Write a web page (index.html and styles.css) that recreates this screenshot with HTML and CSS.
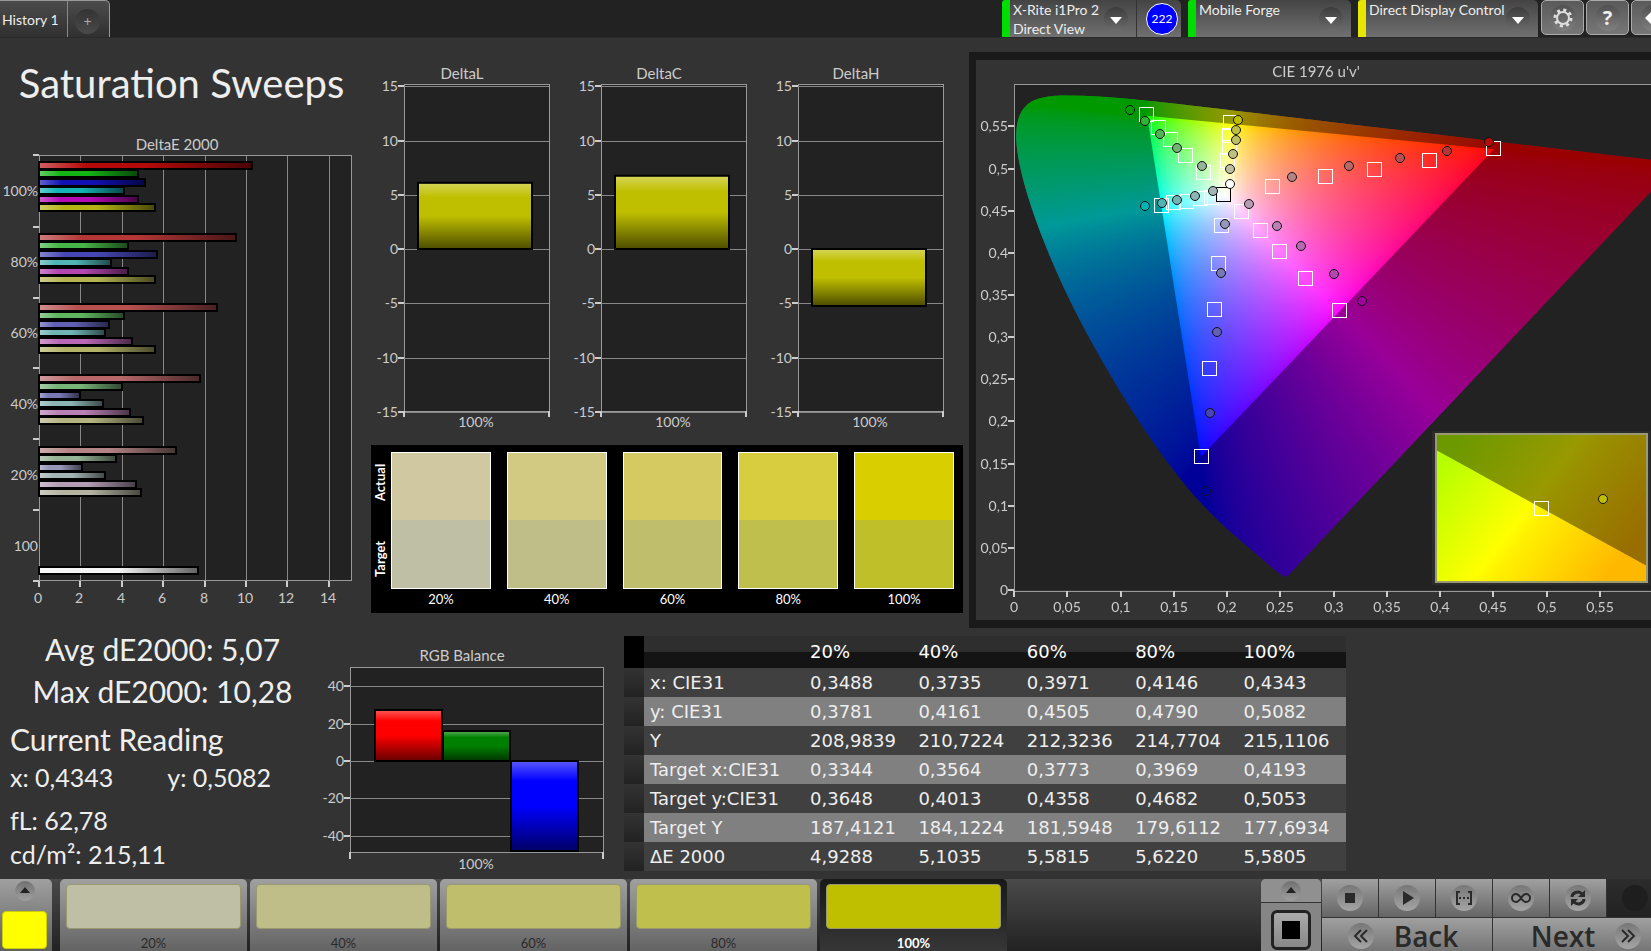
FILE: index.html
```
<!DOCTYPE html>
<html lang="en">

<head>
    <meta charset="UTF-8">
    <meta name="viewport" content="width=device-width, initial-scale=1.0">
    <title>Saturation Sweeps</title>
    <link rel="stylesheet" href="styles.css">
</head>

<body>
    <header class="topbar">
        <div class="tabs">
            <button class="tab">History 1</button>
            <button class="tab tab-add" aria-label="Add tab"><span>+</span></button>
        </div>
        <div class="devices">
            <div class="device meter">
                <button class="device-select">
                    <span class="device-name">X-Rite i1Pro 2<br>Direct View</span>
                    <span class="arrow"></span>
                </button>
                <span class="reading-count">222</span>
            </div>
            <div class="device source">
                <button class="device-select">
                    <span class="device-name">Mobile Forge</span>
                    <span class="arrow"></span>
                </button>
            </div>
            <div class="device display">
                <button class="device-select">
                    <span class="device-name">Direct Display Control</span>
                    <span class="arrow"></span>
                </button>
            </div>
            <div class="tools">
                <button class="tool" aria-label="Settings">
                    <svg viewBox="0 0 26 26" width="26" height="26">
                        <circle cx="13" cy="13" r="6" fill="none" stroke="#ddd" stroke-width="2" />
                        <circle cx="13" cy="13" r="8" fill="none" stroke="#ddd" stroke-width="3" stroke-dasharray="3 3.28" />
                    </svg>
                </button>
                <button class="tool help" aria-label="Help"><span>?</span></button>
                <button class="tool" aria-label="Collapse">
                    <svg viewBox="0 0 26 26" width="26" height="26">
                        <path d="M5 13l8-8v5h8v6h-8v5z" fill="#fff" />
                    </svg>
                </button>
            </div>
        </div>
    </header>

    <main>
        <div class="upper">
            <section class="sweeps">
                <h1>Saturation Sweeps</h1>
                <svg id="deltaE" class="chart" viewBox="0 0 363 475"></svg>
            </section>

            <section class="deltas">
                <div class="delta-charts">
                    <svg id="deltaL" class="chart" viewBox="0 0 197 375"></svg>
                    <svg id="deltaC" class="chart" viewBox="0 0 197 375"></svg>
                    <svg id="deltaH" class="chart" viewBox="0 0 197 375"></svg>
                </div>
                <div class="swatches">
                    <div class="swatch-side"><span>Actual</span><span>Target</span></div>
                    <div class="swatch s20"><i></i>20%</div>
                    <div class="swatch s40"><i></i>40%</div>
                    <div class="swatch s60"><i></i>60%</div>
                    <div class="swatch s80"><i></i>80%</div>
                    <div class="swatch s100"><i></i>100%</div>
                </div>
            </section>

            <section class="cie">
                <canvas id="cieColors" width="675" height="560"></canvas>
                <svg id="cieChart" class="chart" viewBox="976 60 675 560"></svg>
            </section>
        </div>

        <div class="lower">
            <section class="stats">
                <p class="big center">Avg dE2000: 5,07</p>
                <p class="big center">Max dE2000: 10,28</p>
                <h2 class="big">Current Reading</h2>
                <p class="xy"><span>x: 0,4343</span><span>y: 0,5082</span></p>
                <p class="fl">fL: 62,78</p>
                <p>cd/m²: 215,11</p>
            </section>

            <svg id="rgbBalance" class="chart" viewBox="0 0 284 248"></svg>

            <table class="data">
                <thead>
                    <tr><td class="mark"></td><th></th><th>20%</th><th>40%</th><th>60%</th><th>80%</th><th>100%</th></tr>
                </thead>
                <tbody>
                    <tr><td class="mark"></td><th>x: CIE31</th><td>0,3488</td><td>0,3735</td><td>0,3971</td><td>0,4146</td><td>0,4343</td></tr>
                    <tr><td class="mark"></td><th>y: CIE31</th><td>0,3781</td><td>0,4161</td><td>0,4505</td><td>0,4790</td><td>0,5082</td></tr>
                    <tr><td class="mark"></td><th>Y</th><td>208,9839</td><td>210,7224</td><td>212,3236</td><td>214,7704</td><td>215,1106</td></tr>
                    <tr><td class="mark"></td><th>Target x:CIE31</th><td>0,3344</td><td>0,3564</td><td>0,3773</td><td>0,3969</td><td>0,4193</td></tr>
                    <tr><td class="mark"></td><th>Target y:CIE31</th><td>0,3648</td><td>0,4013</td><td>0,4358</td><td>0,4682</td><td>0,5053</td></tr>
                    <tr><td class="mark"></td><th>Target Y</th><td>187,4121</td><td>184,1224</td><td>181,5948</td><td>179,6112</td><td>177,6934</td></tr>
                    <tr><td class="mark"></td><th>ΔE 2000</th><td>4,9288</td><td>5,1035</td><td>5,5815</td><td>5,6220</td><td>5,5805</td></tr>
                </tbody>
            </table>
        </div>
    </main>

    <footer class="bottombar">
        <button class="current" aria-label="Current pattern">
            <span class="knob"></span>
            <i></i>
        </button>
        <div class="patterns">
            <button class="pattern p20"><i></i>20%</button>
            <button class="pattern p40"><i></i>40%</button>
            <button class="pattern p60"><i></i>60%</button>
            <button class="pattern p80"><i></i>80%</button>
            <button class="pattern p100 active"><i></i>100%</button>
        </div>
        <div class="stop-box">
            <button class="expand" aria-label="Expand"><span class="knob"></span></button>
            <button class="stop" aria-label="Stop pattern"><i></i></button>
        </div>
        <div class="transport">
            <button aria-label="Stop"><svg viewBox="0 0 26 26"><path d="M8 8h10v10H8z" /></svg></button>
            <button aria-label="Play"><svg viewBox="0 0 26 26"><path d="M9 6l11 7-11 7z" /></svg></button>
            <button aria-label="Read series"><svg viewBox="0 0 26 26"><path class="line" d="M9 7H6v12h3M17 7h3v12h-3" /><path d="M8 12h2v2H8zM12 12h2v2h-2zM16 12h2v2h-2z" /></svg></button>
            <button aria-label="Continuous"><svg viewBox="0 0 26 26"><path class="line" d="M13 13c-2-3-3-4-5-4a4 4 0 0 0 0 8c2 0 3-1 5-4s3-4 5-4a4 4 0 0 1 0 8c-2 0-3-1-5-4z" /></svg></button>
            <button aria-label="Refresh"><svg viewBox="0 0 26 26"><path class="thick" d="M7 12c0-4 6-7 10-3M19 14c0 4-6 7-10 3" /><path d="M20 5v7h-7zM6 21v-7h7z" /></svg></button>
            <button class="off" aria-label="Record"><svg viewBox="0 0 26 26"></svg></button>
            <button class="wide back"><svg viewBox="0 0 26 26"><path class="line" d="M13 7l-6 6 6 6M19 7l-6 6 6 6" /></svg><span>Back</span></button>
            <button class="wide next"><span>Next</span><svg viewBox="0 0 26 26"><path class="line" d="M7 7l6 6-6 6M13 7l6 6-6 6" /></svg></button>
        </div>
    </footer>

    <script src="script.js"></script>
</body>

</html>
```
FILE: styles.css
```
* {
    box-sizing: border-box;
}

body {
    margin: 0;
    min-height: 100vh;
    display: flex;
    flex-direction: column;
    overflow: hidden;
    background: #333;
    color: #eee;
    font-family: Lato, 'Open Sans', sans-serif;
}

button {
    margin: 0;
    padding: 0;
    border: none;
    background: none;
    color: inherit;
    font: inherit;
    cursor: pointer;
}

h1,
h2,
p {
    margin: 0;
    font-weight: normal;
}

/* Top bar */
.topbar {
    display: flex;
    justify-content: space-between;
    height: 38px;
    overflow: hidden;
    background: #222;
    border-bottom: 1px solid #2a2a2a;
}

.tabs {
    display: flex;
    border: 1px solid #999;
    border-width: 1px 1px 0 0;
    border-top-right-radius: 5px;
    background: linear-gradient(#4c4c4c, #303030);
}

.tab {
    width: 68px;
    padding-left: 2px;
    font-size: 14px;
    text-align: left;
    white-space: nowrap;
    border-right: 1px solid #888;
}

.tab-add {
    width: 41px;
    padding: 4px 0 0 7px;
    border: none;
}

.tab-add span {
    display: block;
    width: 25px;
    height: 25px;
    border-radius: 50%;
    background: linear-gradient(#333, #4a4a4a);
    color: #aaa;
    line-height: 24px;
    text-align: center;
}

.devices {
    display: flex;
    gap: 7px;
    margin-right: -23px;
}

.device {
    display: flex;
    width: 163px;
    border-left: 8px solid #0d0;
    border-radius: 3px 5px 0 0;
    background: linear-gradient(#444, #707070);
}

.meter {
    width: 179px;
}

.display {
    width: 180px;
    border-left-color: #e6e600;
}

.device-select {
    display: flex;
    flex: 1;
    align-items: flex-start;
    justify-content: space-between;
    padding: 0 8px 0 3px;
    text-align: left;
}

.meter .device-select {
    border-right: 1px solid #333;
}

.device-name {
    font-size: 14px;
    line-height: 19px;
    white-space: nowrap;
}

.arrow {
    flex: none;
    width: 24px;
    height: 24px;
    margin: 7px 0 0 -8px;
    padding-top: 10px;
    border-radius: 50%;
    background: linear-gradient(#3c3c3c, #6c6c6c);
}

.arrow::before {
    content: '';
    display: block;
    width: 0;
    margin: 0 auto;
    border: 6px solid transparent;
    border-top: 7px solid #fff;
    border-bottom: none;
}

.reading-count {
    width: 32px;
    height: 32px;
    margin: 3px 3px 0 9px;
    border: 1px solid #fff;
    border-radius: 50%;
    background: #00f;
    color: #fff;
    font-size: 12px;
    line-height: 30px;
    text-align: center;
}

.tools {
    display: flex;
    gap: 2px;
    margin-left: -4px;
}

.tool {
    display: flex;
    align-items: center;
    justify-content: center;
    width: 43px;
    height: 35px;
    border: 1px solid #aaa;
    border-radius: 5px;
    background: linear-gradient(#5a5a5a, #777);
}

.tool svg,
.tool span {
    width: 26px;
    height: 26px;
    border-radius: 50%;
    background: linear-gradient(#505050, #808080);
}

.help {
    font: bold 20px/26px 'Open Sans', sans-serif;
}

/* Charts */
.upper {
    display: grid;
    grid-template-columns: 363fr 606fr 682fr;
}

.chart {
    display: block;
    width: 100%;
    overflow: visible;
    font-size: 14px;
    fill: #ccc;
}

.chart .title {
    font-size: 15px;
}

.plot,
.frame {
    fill: #222;
    stroke: #999;
    stroke-width: 1;
    shape-rendering: crispEdges;
}

.frame {
    fill: none;
}

.grid {
    stroke: #888;
    stroke-width: 1;
    shape-rendering: crispEdges;
}

.tick {
    stroke: #ccc;
    stroke-width: 2;
}

.bar {
    stroke: #000;
    stroke-width: 2;
}

.sweeps h1 {
    margin-bottom: 7px;
    font-size: 40px;
    line-height: 90px;
    text-align: center;
}

.deltas {
    padding-top: 25px;
}

.delta-charts {
    display: grid;
    grid-template-columns: repeat(3, 1fr);
    padding: 0 14px 0 1px;
}

.swatches {
    display: flex;
    gap: 16px;
    height: 168px;
    margin: 7px 6px 0 8px;
    padding: 7px 9px 0 0;
    background: #000;
    color: #fff;
    font-size: 13px;
}

/* Runs bottom to top beside the swatches */
.swatch-side {
    display: flex;
    flex-direction: row-reverse;
    justify-content: space-between;
    width: 20px;
    height: 137px;
    margin-right: -16px;
    padding: 12px 0;
    writing-mode: vertical-rl;
    transform: rotate(180deg);
    font-weight: bold;
    line-height: 18px;
}

.swatch {
    flex: 1;
    text-align: center;
    line-height: 16px;
}

.swatch i {
    display: block;
    height: 137px;
    margin-bottom: 2px;
    border: 1px solid #fff;
}

.s20 i { background: linear-gradient(#d0c8a0 50%, #bfbfa5 50%); }
.s40 i { background: linear-gradient(#d2c983 50%, #bfbe88 50%); }
.s60 i { background: linear-gradient(#d5ca62 50%, #bfbe6c 50%); }
.s80 i { background: linear-gradient(#d8cd3e 50%, #bfbf4e 50%); }
.s100 i { background: linear-gradient(#d8ce00 50%, #bfbf2a 50%); }

.cie {
    display: grid;
    margin-top: 14px;
    border: solid #1a1a1a;
    border-width: 8px 0 8px 7px;
    overflow: hidden;
}

.cie > * {
    grid-area: 1 / 1;
    display: block;
    width: 100%;
}

.target {
    fill: none;
    stroke: #fff;
    stroke-width: 1;
    shape-rendering: crispEdges;
}

.white-point {
    stroke: #000;
}

.actual {
    stroke: #111;
    stroke-width: 1;
}

/* Readings */
.lower {
    display: grid;
    grid-template-columns: 340fr 284fr 722fr 305fr;
    align-items: start;
}

.stats {
    padding: 0 15px 0 10px;
    font-size: 25px;
    line-height: 34px;
}

.stats .big {
    font-size: 30px;
    line-height: 42px;
}

.stats h2 {
    margin-top: 6px;
}

.stats .center {
    margin-left: -10px;
    text-align: center;
}

.xy {
    display: flex;
    gap: 54px;
}

.fl {
    margin-top: 9px;
}

.data {
    width: 100%;
    margin-top: 8px;
    border-collapse: collapse;
    table-layout: fixed;
    font: 18px/28px 'DejaVu Sans', sans-serif;
    white-space: nowrap;
}

.data th,
.data td {
    height: 29px;
    padding: 0 0 0 6px;
    font-weight: normal;
    text-align: left;
}

.data .mark {
    width: 20px;
    background: linear-gradient(#333, #222);
}

.data th:nth-child(2) {
    width: 160px;
}

.data thead tr {
    background: linear-gradient(#2e2e2e 50%, #141414 50%);
}

.data thead th {
    height: 32px;
    color: #fff;
}

.data thead .mark {
    background: #000;
}

.data tbody tr {
    background: #404040;
}

.data tbody tr:nth-child(even) {
    background: #808080;
}

/* Bottom bar */
.bottombar {
    display: flex;
    height: 72px;
    margin-top: auto;
    overflow: hidden;
    background: linear-gradient(#4a4a4a, #222);
}

.bottombar button {
    flex: none;
    background: linear-gradient(#a0a0a0, #606060);
}

.bottombar .current {
    display: block;
    width: 52px;
    height: 72px;
    margin-right: 8px;
    padding: 0 5px 0 2px;
    border-top-right-radius: 5px;
}

.current i {
    display: block;
    height: 38px;
    margin-top: 10px;
    border: 1px solid #cc0;
    border-radius: 4px;
    background: #ff0;
}

.knob {
    display: block;
    width: 20px;
    height: 20px;
    margin: 0 auto;
    padding-top: 6px;
    border-radius: 50%;
    background: linear-gradient(#707070, #a0a0a0);
}

.knob::before {
    content: '';
    display: block;
    width: 0;
    margin: 0 auto;
    border: 5px solid transparent;
    border-top: none;
    border-bottom: 6px solid #222;
}

.patterns {
    display: flex;
    flex: 1;
    gap: 3px;
}

.bottombar .pattern {
    display: block;
    width: 187px;
    height: 76px;
    padding: 0 6px;
    border-radius: 5px 5px 0 0;
    color: #2a2a2a;
    font-size: 13px;
    line-height: 16px;
}

.pattern i {
    display: block;
    height: 45px;
    margin-bottom: 6px;
    border: 1px solid #999a70;
    border-radius: 4px;
}

.p20 i { background: #bfbfa5; }
.p40 i { background: #bfbe88; }
.p60 i { background: #bfbe6c; }
.p80 i { background: #bfbf4e; }
.p100 i { background: #bfbf00; }

.bottombar .active {
    background: linear-gradient(#181818, #383838);
    color: #fff;
    font-weight: bold;
}

.stop-box {
    width: 60px;
    margin-right: 1px;
    border-radius: 5px 5px 0 0;
    background: #858585;
    overflow: hidden;
}

.bottombar .expand {
    display: block;
    width: 100%;
    height: 24px;
    border-bottom: 1px solid #333;
    background: #909090;
}

.bottombar .stop {
    display: block;
    width: 40px;
    height: 40px;
    margin: 7px auto 0;
    padding: 8px;
    border: 3px solid #222;
    border-radius: 6px;
    background: linear-gradient(#aaa, #888);
}

.stop i {
    display: block;
    height: 18px;
    background: #000;
}

.transport {
    display: grid;
    grid-template-columns: repeat(6, 56px);
    grid-template-rows: 38px 46px;
    gap: 1px;
    margin-right: -12px;
    background: #333;
}

.bottombar .transport button {
    display: flex;
    align-items: center;
    justify-content: center;
    background: linear-gradient(#a0a0a0, #656565);
}

.bottombar .transport .off {
    background: linear-gradient(#2c2c2c, #222);
}

.bottombar .transport .wide {
    grid-column: span 3;
    gap: 20px;
    padding-bottom: 10px;
    color: #2a2a2a;
    font: 600 28px/36px 'Open Sans', sans-serif;
}

.transport .back {
    padding-right: 8px;
}

.transport .next {
    padding-left: 16px;
}

.transport svg {
    width: 26px;
    height: 26px;
    border-radius: 50%;
    background: linear-gradient(#777, #a5a5a5);
    fill: #2a2a2a;
}

.transport .off svg {
    background: #1e1e1e;
}

.transport .line,
.transport .thick {
    fill: none;
    stroke: #2a2a2a;
    stroke-width: 2;
}

.transport .thick {
    stroke-width: 3;
}
```
FILE: script.js
```
const SHADE = `
    <linearGradient id="ID" x1="0" y1="0" x2="X2" y2="Y2">
        <stop offset="0" stop-color="#fff" stop-opacity="0.35" />
        <stop offset="0.22" stop-color="#fff" stop-opacity="0" />
        <stop offset="0.5" stop-color="#000" stop-opacity="0" />
        <stop offset="1" stop-color="#000" stop-opacity="0.6" />
    </linearGradient>`;

function line(cls, x1, y1, x2, y2) {
    return `<line class="${cls}" x1="${x1}" y1="${y1}" x2="${x2}" y2="${y2}" />`;
}

function text(x, y, anchor, value) {
    return `<text x="${x}" y="${y}" text-anchor="${anchor}">${value}</text>`;
}

function title(x, y, value) {
    return `<text class="title" x="${x}" y="${y}" text-anchor="middle">${value}</text>`;
}

// A bar is a flat colour with the shade gradient laid over it
function bar(x, y, w, h, color, shade) {
    const box = `x="${x}" y="${y}" width="${w}" height="${h}"`;
    return `<rect ${box} fill="${color}" /><rect class="bar" ${box} fill="url(#${shade})" />`;
}

function shade(id, vertical) {
    return '<defs>' + SHADE.replace('ID', id).replace('X2', vertical ? 0 : 1).replace('Y2', vertical ? 1 : 0) + '</defs>';
}

// DeltaE 2000, horizontal bars
function drawDeltaE() {
    const groups = [
        { label: '100%', top: 27, values: [10.28, 4.8, 5.1, 4.1, 4.8, 5.58], colors: ['#b40a0a', '#14b414', '#1010b4', '#14b4b4', '#b40ab4', '#b4b414'] },
        { label: '80%', top: 99, values: [9.5, 4.3, 5.7, 3.5, 4.3, 5.6], colors: ['#b43636', '#46b446', '#4646b4', '#50b4b4', '#b446b0', '#b4b450'] },
        { label: '60%', top: 169, values: [8.6, 4.1, 3.4, 3.2, 4.5, 5.58], colors: ['#b85050', '#60b460', '#6060b4', '#70b4b4', '#b868b4', '#b4b468'] },
        { label: '40%', top: 240, values: [7.8, 4, 2, 3.1, 4.4, 5], colors: ['#b86868', '#78b478', '#7878b4', '#8cb4b4', '#b880b4', '#b4b482'] },
        { label: '20%', top: 312, values: [6.6, 3.7, 2.1, 3.2, 4.7, 4.93], colors: ['#b48484', '#96b496', '#9696b8', '#a4b4b4', '#b49cb4', '#b4b4a0'] },
        { label: '100', top: 432, values: [7.7], colors: ['#f4f4f4'] }
    ];
    const ticks = [20, 92, 163, 233, 304, 375, 446];
    let out = shade('shadeE', false) + title(177, 15, 'DeltaE 2000');
    out += '<rect class="plot" x="39" y="20" width="312" height="425" />';
    for (let v = 0; v <= 14; v += 2) {
        const x = Math.round(39 + v * 20.7);
        if (v > 0) out += line('grid', x, 21, x, 445);
        out += line('tick', x, 446, x, 452) + text(x - 1, 468, 'middle', v);
    }
    ticks.forEach(y => out += line('tick', 33, y, 39, y));
    groups.forEach((g, i) => {
        out += text(38, 61 + i * 71, 'end', g.label);
        g.values.forEach((v, n) => {
            out += bar(39, g.top + Math.round(n * 8.4), Math.round(v * 20.7), 7, g.colors[n], 'shadeE');
        });
    });
    document.getElementById('deltaE').innerHTML = out;
}

function drawDelta(id, value) {
    const zero = 186, step = 10.85;
    let out = shade(id + 'Shade', true) + title(98, 16, id.replace('d', 'D'));
    out += '<rect class="plot" x="40" y="21" width="145" height="327" />';
    for (let v = -15; v <= 15; v += 5) {
        const y = Math.round(zero - v * step);
        out += line('grid', 40, y, 185, y) + line('tick', 34, y, 40, y) + text(34, y + 5, 'end', v);
    }
    out += line('tick', 40, 348, 40, 354) + line('tick', 185, 348, 185, 354);
    const size = Math.abs(value) * step;
    out += bar(54, value > 0 ? zero - size : zero, 114, size, '#bfbf00', id + 'Shade');
    out += text(112, 364, 'middle', '100%');
    document.getElementById(id).innerHTML = out;
}

function drawRgb() {
    const zero = 133, step = 1.87;
    let out = shade('shadeRgb', true) + title(122, 33, 'RGB Balance');
    out += '<rect class="plot" x="10" y="39" width="253" height="185" />';
    for (let v = -40; v <= 40; v += 20) {
        const y = Math.round(zero - v * step);
        out += line('grid', 10, y, 263, y) + line('tick', 4, y, 10, y) + text(4, y + 5, 'end', v);
    }
    out += line('tick', 10, 224, 10, 231) + line('tick', 263, 224, 263, 231);
    out += bar(35, 82, 67, 51, '#f00', 'shadeRgb');
    out += bar(103, 103, 67, 30, '#008000', 'shadeRgb');
    out += bar(171, 133, 67, 90, '#00f', 'shadeRgb');
    out += text(136, 241, 'middle', '100%');
    document.getElementById('rgbBalance').innerHTML = out;
}

// Spectral locus, CIE 1931 x and y
const LOCUS = [
    [.1741, .0050], [.1733, .0048], [.1714, .0051], [.1689, .0069], [.1644, .0109], [.1566, .0177], [.1510, .0227],
    [.1440, .0297], [.1355, .0399], [.1241, .0578], [.1096, .0868], [.0913, .1327], [.0687, .2007], [.0454, .2950],
    [.0235, .4127], [.0082, .5384], [.0039, .6548], [.0139, .7502], [.0389, .8120], [.0743, .8338], [.1142, .8262],
    [.1547, .8059], [.2296, .7543], [.3016, .6923], [.3731, .6245], [.4441, .5547], [.5125, .4866], [.5752, .4242],
    [.6270, .3725], [.6658, .3340], [.6915, .3083], [.7190, .2809], [.7347, .2653]
];

// u'v' to canvas pixels
const U0 = 38, V0 = 530, US = 1065, VS = 843;
const toPx = (u, v) => [U0 + u * US, V0 - v * VS];

function colorAt(u, v) {
    const d = 6 * u - 16 * v + 12;
    const x = 9 * u / d, y = 4 * v / d;
    const X = x / y, Z = (1 - x - y) / y;
    const rgb = [
        3.2406 * X - 1.5372 - 0.4986 * Z,
        -0.9689 * X + 1.8758 + 0.0415 * Z,
        0.0557 * X - 0.2040 + 1.0570 * Z
    ].map(c => Math.max(0, c));
    const max = Math.max(...rgb);
    return rgb.map(c => 255 * Math.pow(c / max, 1 / 1.6));
}

function drawCieColors() {
    const canvas = document.getElementById('cieColors');
    const ctx = canvas.getContext('2d');
    const w = canvas.width, h = canvas.height;
    ctx.fillStyle = '#222';
    ctx.fillRect(U0, 24, w, V0 - 24);

    const layer = document.createElement('canvas');
    layer.width = w;
    layer.height = h;
    const lctx = layer.getContext('2d');
    const img = lctx.createImageData(w, h);
    for (let py = 0; py < V0; py++) {
        for (let px = U0; px < w; px++) {
            const c = colorAt((px - U0) / US, (V0 - py) / VS);
            const i = (py * w + px) * 4;
            img.data[i] = c[0];
            img.data[i + 1] = c[1];
            img.data[i + 2] = c[2];
            img.data[i + 3] = 255;
        }
    }
    lctx.putImageData(img, 0, 0);

    const pts = LOCUS.map(([x, y]) => {
        const d = -2 * x + 12 * y + 3;
        return toPx(4 * x / d, 9 * y / d);
    });
    ctx.beginPath();
    ctx.moveTo(...pts[0]);
    for (let i = 1; i < pts.length - 1; i++) {
        const [x, y] = pts[i], [nx, ny] = pts[i + 1];
        ctx.quadraticCurveTo(x, y, (x + nx) / 2, (y + ny) / 2);
    }
    ctx.lineTo(...pts[pts.length - 1]);
    ctx.closePath();
    ctx.clip();
    ctx.drawImage(layer, 0, 0);

    // Darken everything outside the Rec.709 triangle
    ctx.beginPath();
    ctx.rect(0, 0, w, h);
    ctx.moveTo(...toPx(.4507, .5229));
    ctx.lineTo(...toPx(.125, .5625));
    ctx.lineTo(...toPx(.1754, .1579));
    ctx.closePath();
    ctx.fillStyle = 'rgba(0, 0, 0, 0.4)';
    ctx.fill('evenodd');
}

function drawCieChart() {
    const targets = [
        [1146, 114], [1158, 127], [1170, 139], [1185, 155], [1203, 172],
        [1230, 122], [1229, 135], [1229, 147], [1227, 160], [1226, 176],
        [1161, 205], [1173, 202], [1186, 201], [1200, 198], [1211, 197],
        [1241, 211], [1260, 230], [1279, 251], [1305, 278], [1339, 310],
        [1221, 225], [1218, 263], [1214, 309], [1209, 368], [1201, 456],
        [1272, 186], [1325, 176], [1374, 169], [1429, 160], [1493, 148]
    ];
    const actuals = [
        [1130, 110, '#00a000'], [1145, 121, '#32b432'], [1160, 134, '#50b450'], [1177, 148, '#70b470'], [1202, 166, '#96b496'],
        [1238, 120, '#bfbf00'], [1236, 130, '#bfbf40'], [1236, 140, '#bfbf60'], [1233, 154, '#bfbf80'], [1230, 169, '#bfbfa0'],
        [1145, 206, '#00b4b4'], [1162, 203, '#50b4b4'], [1177, 200, '#70b4b4'], [1195, 196, '#8cb4b4'], [1213, 191, '#a4b4b4'],
        [1249, 204, '#b49cb4'], [1277, 226, '#b880b4'], [1301, 246, '#b868b4'], [1334, 274, '#b446b0'], [1362, 301, '#a000a0'],
        [1225, 224, '#9696b8'], [1221, 273, '#7878b4'], [1217, 332, '#6060b4'], [1210, 413, '#4646b4'], [1206, 491, '#0000a0'],
        [1292, 177, '#b48484'], [1349, 166, '#b86868'], [1400, 158, '#b85050'], [1447, 151, '#b43636'], [1489, 142, '#b40a0a'],
        [1230, 184, '#fff']
    ];
    const square = ([x, y], extra = '') => `<rect class="target ${extra}" x="${x - 7}" y="${y - 7}" width="14" height="14" />`;
    const dot = ([x, y, c]) => `<circle class="actual" cx="${x}" cy="${y}" r="4.5" fill="${c}" />`;
    const label = v => String(v / 100).replace('.', ',');

    let out = title(1316, 77, "CIE 1976 u'v'");
    out += '<path class="frame" d="M1660 84H1014V591H1660" />';
    for (let v = 0; v <= 55; v += 5) {
        const x = Math.round(1014 + v * 10.65), y = Math.round(590 - v * 8.43);
        out += line('tick', x, 591, x, 597) + text(x, 612, 'middle', label(v));
        out += line('tick', 1008, y, 1014, y) + text(1008, y + 5, 'end', label(v));
    }
    out += targets.map(t => square(t)).join('');
    out += square([1223, 194], 'white-point');
    out += actuals.map(dot).join('');

    // Magnified view of the current point
    out += `
        <defs>
            <linearGradient id="lens" gradientUnits="userSpaceOnUse" x1="1457" y1="441" x2="1617" y2="563">
                <stop offset="0" stop-color="#b4ff00" />
                <stop offset="0.48" stop-color="#ffff00" />
                <stop offset="0.56" stop-color="#fff000" />
                <stop offset="1" stop-color="#ffb800" />
            </linearGradient>
        </defs>
        <rect x="1432" y="431" width="218" height="154" fill="#2c2c2c" />
        <rect x="1436" y="434" width="211" height="148" fill="url(#lens)" />
        <path d="M1436 450L1647 566V434H1436z" fill="#000" fill-opacity="0.4" />
        <rect x="1436" y="434" width="211" height="148" fill="none" stroke="#999a70" stroke-width="2" />`;
    out += square([1541, 508]) + dot([1603, 499, '#bfbf00']);
    document.getElementById('cieChart').innerHTML = out;
}

drawDeltaE();
drawDelta('deltaL', 6.1);
drawDelta('deltaC', 6.75);
drawDelta('deltaH', -5.25);
drawRgb();
drawCieColors();
drawCieChart();
```
